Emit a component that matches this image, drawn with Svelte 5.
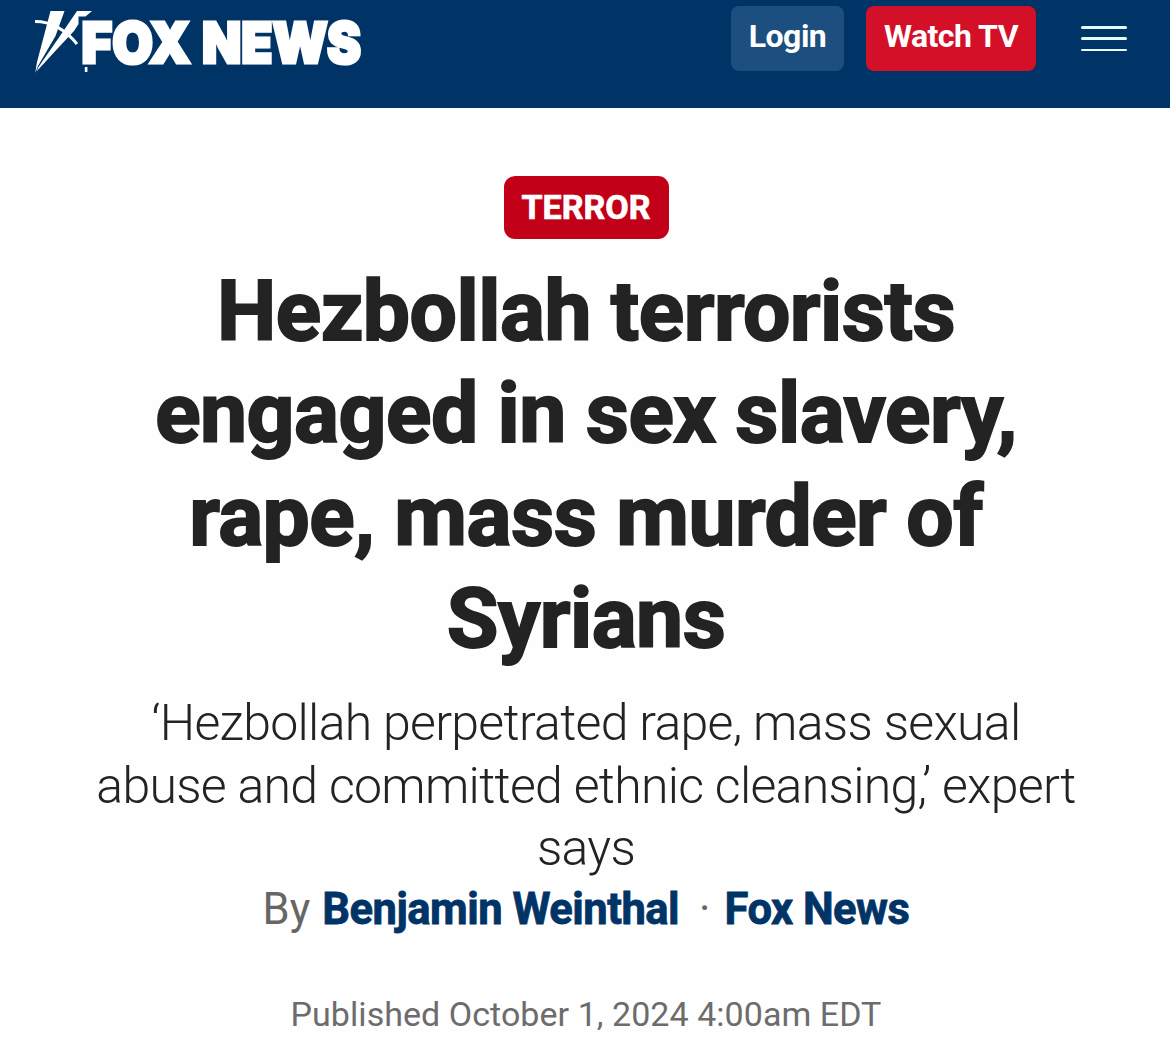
<script lang="ts">
  const headline = [
    'Hezbollah terrorists',
    'engaged in sex slavery,',
    'rape, mass murder of',
    'Syrians'
  ];

  const summary = [
    '‘Hezbollah perpetrated rape, mass sexual',
    'abuse and committed ethnic cleansing,’ expert',
    'says'
  ];
</script>

<header class="site-header">
  <svg class="logo" viewBox="0 0 400 90" role="img" aria-label="Fox News">
    <!-- searchlights -->
    <g transform="translate(20 0)">
      <path d="M30.5 11H44.5L35.5 36L18 66L15.2 73L17 62Z" />
      <path d="M57 11H72L65.5 16.5H58.5V24L54 31L39 47L16.5 71.5L18.5 67L42 33Z" />
      <path class="arc" d="M15 21.5C31 21.5 44 28 57 44" />
      <rect x="64.8" y="67" width="2.6" height="5" />
    </g>
    <g class="wordmark">
      <text x="81.5" y="62.6" textLength="109" lengthAdjust="spacingAndGlyphs">FOX</text>
      <text x="202" y="62.6" textLength="159" lengthAdjust="spacingAndGlyphs">NEWS</text>
    </g>
  </svg>

  <nav class="actions">
    <button class="btn login">Login</button>
    <button class="btn watch">Watch TV</button>
    <button class="menu" aria-label="Menu">
      <span></span>
      <span></span>
      <span></span>
    </button>
  </nav>
</header>

<main class="article">
  <a class="tag" href="#terror">TERROR</a>

  <h1>
    {#each headline as line}
      <span>{line}</span>
    {/each}
  </h1>

  <h2>
    {#each summary as line}
      <span>{line}</span>
    {/each}
  </h2>

  <div class="byline">
    <span class="by">By</span>
    <a class="author" href="#author">Benjamin Weinthal</a>
    <span class="dot">·</span>
    <a class="source" href="#source">Fox News</a>
  </div>

  <time>Published October 1, 2024 4:00am EDT</time>
</main>

<style>
  :global(body) {
    margin: 0;
    background: #fefefe;
    overflow: hidden;
  }

  .site-header,
  .article {
    font-family: Roboto, 'Liberation Sans', sans-serif;
  }

  .site-header {
    display: flex;
    justify-content: space-between;
    align-items: flex-start;
    box-sizing: border-box;
    height: 107.5px;
    padding-right: 43px;
    background: #003366;
  }

  .logo {
    width: 400px;
    height: 90px;
    overflow: visible;
    fill: #fff;
  }

  .arc {
    fill: none;
    stroke: #fff;
    stroke-width: 3;
  }

  .wordmark {
    font-family: Inter, sans-serif;
    font-size: 57px;
    font-weight: 900;
    stroke: #fff;
    stroke-width: 3.2;
  }

  .actions {
    display: flex;
    align-items: flex-start;
    padding-top: 6px;
  }

  button {
    border: 0;
    padding: 0;
    font-family: inherit;
  }

  .btn {
    height: 65px;
    padding-bottom: 6px;
    border-radius: 8px;
    color: #fff;
    font-size: 32px;
    font-weight: 700;
    letter-spacing: -0.5px;
  }

  .login {
    width: 113px;
    margin-right: 22px;
    background: #1c4f80;
  }

  .watch {
    width: 170px;
    margin-right: 45px;
    background: #d31027;
  }

  .menu {
    display: flex;
    flex-direction: column;
    gap: 8.4px;
    width: 46px;
    margin-top: 20.2px;
    background: none;
  }

  .menu span {
    height: 2.8px;
    border-radius: 2px;
    background: #e6fbff;
  }

  .article {
    display: flex;
    flex-direction: column;
    align-items: center;
    padding: 68.5px 0 0 2px;
    text-align: center;
    white-space: nowrap;
  }

  .tag {
    box-sizing: border-box;
    width: 165px;
    height: 63px;
    border-radius: 11px;
    background: #c20017;
    color: #fff;
    font-size: 34px;
    font-weight: 700;
    line-height: 63px;
    text-decoration: none;
    -webkit-text-stroke: 0.7px #fff;
  }

  h1,
  h2 {
    margin: 0;
    color: #232323;
  }

  h1 span,
  h2 span {
    display: block;
  }

  h1 {
    margin-top: 21.5px;
    font-size: 84px;
    font-weight: 700;
    line-height: 102.6px;
    letter-spacing: -0.5px;
    word-spacing: -0.5px;
    -webkit-text-stroke: 1.9px #232323;
  }

  h2 {
    margin-top: 21.1px;
    font-size: 50px;
    font-weight: 300;
    line-height: 62.7px;
    letter-spacing: -0.7px;
  }

  .byline {
    display: flex;
    margin-top: 2.5px;
    color: #666;
    font-size: 43.5px;
    line-height: 54px;
  }

  .byline a {
    color: #003366;
    font-weight: 700;
    letter-spacing: -0.5px;
    text-decoration: none;
    -webkit-text-stroke: 0.8px #003366;
  }

  .author {
    margin-left: 12px;
  }

  .dot {
    margin: 0 14px 0 20px;
  }

  time {
    margin-top: 55px;
    color: #6c6c6c;
    font-size: 34px;
    line-height: 44px;
    letter-spacing: 0.05px;
  }
</style>
